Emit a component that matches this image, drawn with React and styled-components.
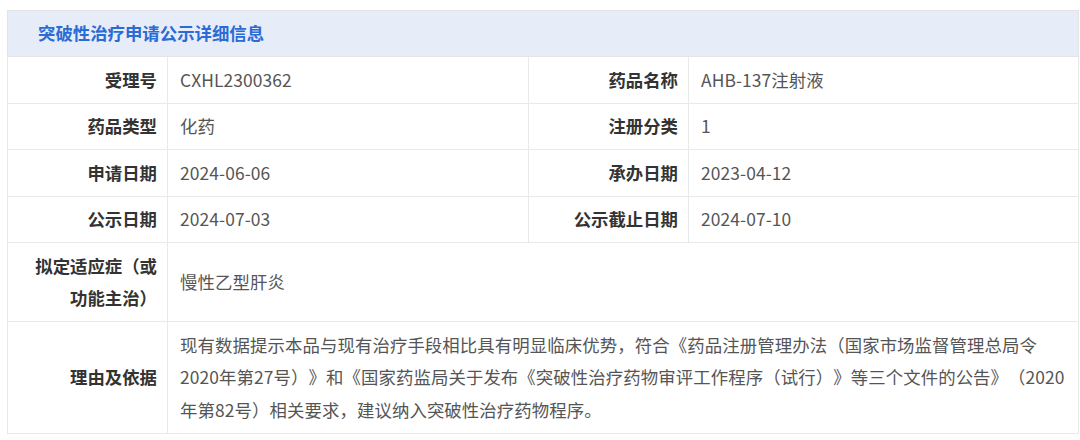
import React from 'react';
import styled, { createGlobalStyle } from 'styled-components';

const GlobalStyle = createGlobalStyle`
  body {
    margin: 0;
    background: #ffffff;
    font-family: "Noto Sans CJK SC", "Noto Sans", sans-serif;
  }
`;

const Page = styled.div`
  padding: 10px 2px 0 7px;
`;

const Table = styled.table`
  width: 1071px;
  border-collapse: collapse;
  table-layout: fixed;
  font-size: 17.4px;
  line-height: 32.5px;
  text-spacing-trim: space-all;
  border: 1px solid #e4e4e4;
`;

const HeadCell = styled.th`
  height: 45px;
  padding: 0 0 0 30px;
  background: #e6edf8;
  color: #2a6bd5;
  font-weight: 700;
  text-align: left;
  border-bottom: 1px solid #e4e4e4;
`;

const Label = styled.td`
  padding: 6.5px 10px 6.5px 12px;
  color: #333333;
  font-weight: 700;
  text-align: right;
  border: 1px solid #e9e9e9;
`;

const Value = styled.td`
  padding: 6.5px 12px;
  color: #555555;
  text-align: left;
  letter-spacing: 0.1px;
  border: 1px solid #e9e9e9;
`;

const pairs = [
  ['受理号', 'CXHL2300362', '药品名称', 'AHB-137注射液'],
  ['药品类型', '化药', '注册分类', '1'],
  ['申请日期', '2024-06-06', '承办日期', '2023-04-12'],
  ['公示日期', '2024-07-03', '公示截止日期', '2024-07-10'],
];

export default function App() {
  return (
    <Page>
      <GlobalStyle />
      <Table>
        <colgroup>
          <col style={{ width: 160 }} />
          <col style={{ width: 361 }} />
          <col style={{ width: 160 }} />
          <col style={{ width: 390 }} />
        </colgroup>
        <thead>
          <tr>
            <HeadCell colSpan={4}>突破性治疗申请公示详细信息</HeadCell>
          </tr>
        </thead>
        <tbody>
          {pairs.map(([l1, v1, l2, v2]) => (
            <tr key={l1}>
              <Label>{l1}</Label>
              <Value>{v1}</Value>
              <Label>{l2}</Label>
              <Value>{v2}</Value>
            </tr>
          ))}
          <tr>
            <Label>拟定适应症（或<br />功能主治）</Label>
            <Value colSpan={3}>慢性乙型肝炎</Value>
          </tr>
          <tr>
            <Label>理由及依据</Label>
            <Value colSpan={3}>
              现有数据提示本品与现有治疗手段相比具有明显临床优势，符合《药品注册管理办法（国家市场监督管理总局令2020年第27号）》和《国家药监局关于发布《突破性治疗药物审评工作程序（试行）》等三个文件的公告》（2020年第82号）相关要求，建议纳入突破性治疗药物程序。
            </Value>
          </tr>
        </tbody>
      </Table>
    </Page>
  );
}
